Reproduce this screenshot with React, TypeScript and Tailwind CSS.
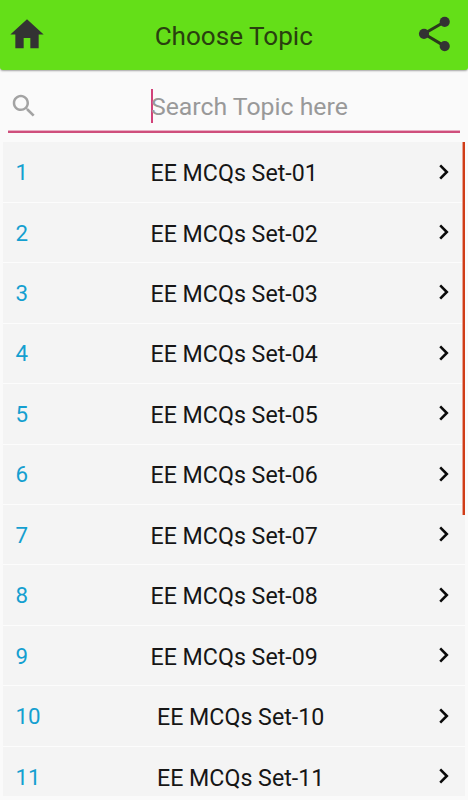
const topics = [
  { id: 1, name: "EE MCQs Set-01" },
  { id: 2, name: "EE MCQs Set-02" },
  { id: 3, name: "EE MCQs Set-03" },
  { id: 4, name: "EE MCQs Set-04" },
  { id: 5, name: "EE MCQs Set-05" },
  { id: 6, name: "EE MCQs Set-06" },
  { id: 7, name: "EE MCQs Set-07" },
  { id: 8, name: "EE MCQs Set-08" },
  { id: 9, name: "EE MCQs Set-09" },
  { id: 10, name: "EE MCQs Set-10" },
  { id: 11, name: "EE MCQs Set-11" },
];

function HomeIcon() {
  return (
    <svg width="40" height="41" viewBox="0 0 24 24" preserveAspectRatio="none" fill="#333333">
      <path d="M10 20v-6h4v6h5v-8h3L12 3 2 12h3v8z" />
    </svg>
  );
}

function ShareIcon() {
  return (
    <svg width="32" height="36" viewBox="0 0 32 36">
      <path d="M26.7 5.8 6 17.8l20.7 12.3" fill="none" stroke="#2a3a1c" strokeWidth="3" />
      <g fill="#333333">
        <circle cx="26.7" cy="5.8" r="5.1" />
        <circle cx="6" cy="17.8" r="5.1" />
        <circle cx="26.7" cy="30.1" r="5.1" />
      </g>
    </svg>
  );
}

function SearchIcon() {
  return (
    <svg width="30" height="30" viewBox="0 0 24 24" fill="#a3a3a3">
      <path d="M15.5 14h-.79l-.28-.27C15.41 12.59 16 11.11 16 9.5 16 5.91 13.09 3 9.5 3S3 5.91 3 9.5 5.91 16 9.5 16c1.61 0 3.09-.59 4.23-1.57l.27.28v.79l5 4.99L20.49 19l-4.99-5zm-6 0C7.01 14 5 11.99 5 9.5S7.01 5 9.5 5 14 7.01 14 9.5 11.99 14 9.5 14z" />
    </svg>
  );
}

function ChevronIcon() {
  return (
    <svg width="10" height="16" viewBox="0 0 10 16" fill="none" stroke="#0b0b0b" strokeWidth="2.6">
      <path d="M1.2 1.4 7.8 8l-6.6 6.6" />
    </svg>
  );
}

export default function App() {
  return (
    <div className="flex h-[800px] w-[468px] flex-col overflow-hidden bg-[#fafafa] font-['Roboto',sans-serif]">
      <header className="flex h-[70px] shrink-0 items-center justify-between rounded-b-[3px] bg-[#64df18] pr-[18px] pl-[7px] shadow-[0_1px_2px_rgba(0,0,0,0.35)]">
        <button type="button" aria-label="Home" className="-mt-[2px]">
          <HomeIcon />
        </button>
        <h1 className="mt-[2px] ml-[2.5px] text-[26.1px] leading-8 whitespace-nowrap text-[#29400f]">Choose Topic</h1>
        <button type="button" aria-label="Share" className="-mt-[2px]">
          <ShareIcon />
        </button>
      </header>

      <div className="mx-2 flex h-[63px] shrink-0 items-center border-b-2 border-[#cf4f7c] shadow-[inset_0_-1px_0_#e9afc4]">
        <span className="mt-[10px] ml-px">
          <SearchIcon />
        </span>
        <span className="mt-[10px] ml-[112px] h-[34px] w-[2px] shrink-0 bg-[#d14279]" />
        <span className="mt-[13px] -ml-[2px] text-[24.8px] leading-8 whitespace-nowrap text-[#999999]">Search Topic here</span>
      </div>

      <div className="relative mt-[9.4px] min-h-0 pr-[3px] pl-[3px]">
        <ul>
          {topics.map((topic) => (
            <li
              key={topic.id}
              className="flex h-[60.45px] items-center border-b border-b-[#fcfcfc] bg-[#f4f4f4] pl-[12.5px] last:h-[49.5px] last:border-b-0 [&:last-child>*]:translate-y-[5px]"
            >
              <span className={`shrink-0 text-[22.3px] leading-7 text-[#149fd0] ${topic.id > 9 ? "w-[141.5px]" : "w-[135px]"}`}>
                {topic.id}
              </span>
              <span className="mt-[2px] grow text-[23.2px] leading-7 whitespace-nowrap text-[#161616]">{topic.name}</span>
              <span className="-mt-px mr-[16px] shrink-0">
                <ChevronIcon />
              </span>
            </li>
          ))}
        </ul>
        {/* scroll indicator */}
        <div className="absolute top-0 right-[3px] h-[373px] w-[2px] bg-[#d03c17] shadow-[-1px_0_0_#e9a290]" />
      </div>
    </div>
  );
}
